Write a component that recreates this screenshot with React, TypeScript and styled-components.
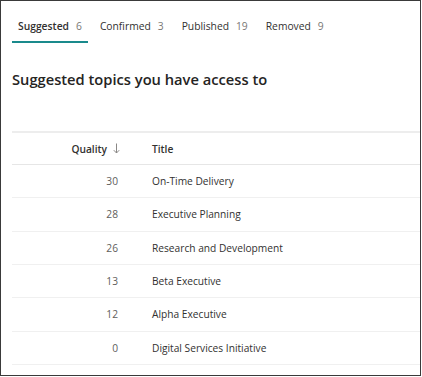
import styled, { createGlobalStyle } from "styled-components";

const GlobalStyle = createGlobalStyle`
  html, body {
    margin: 0;
    padding: 0;
    background: #ffffff;
  }
  body {
    font-family: "Open Sans", "Noto Sans", sans-serif;
    color: #323130;
  }
`;

const Frame = styled.div`
  box-sizing: border-box;
  width: 421px;
  height: 376px;
  border: 1px solid #3a3a3a;
  background: #ffffff;
  padding: 0 0 0 11px;
  overflow: hidden;
`;

const TabBar = styled.div`
  display: flex;
  align-items: stretch;
  gap: 6px;
  height: 34px;
  margin-top: 8px;
`;

const Tab = styled.div<{ $active?: boolean }>`
  position: relative;
  display: flex;
  align-items: center;
  gap: 7px;
  padding: 0 6px;
  font-size: 10.3px;
  font-weight: ${(p) => (p.$active ? 600 : 400)};
  color: #323130;
  &::after {
    content: "";
    position: absolute;
    left: 0;
    right: 0;
    bottom: 0;
    height: 2px;
    background: ${(p) => (p.$active ? "#1a8a8c" : "transparent")};
  }
`;

const Count = styled.span`
  font-weight: 400;
  color: #797775;
`;

const Heading = styled.h2`
  margin: 25px 0 0;
  font-size: 14.7px;
  font-weight: 600;
  line-height: 22px;
  color: #252423;
`;

const Table = styled.div`
  margin-top: 41px;
  border-top: 2px solid #ededed;
`;

const Row = styled.div<{ $header?: boolean }>`
  box-sizing: border-box;
  display: grid;
  grid-template-columns: 117px 1fr;
  align-items: center;
  height: ${(p) => (p.$header ? "32px" : "33.33px")};
  border-bottom: 1px solid ${(p) => (p.$header ? "#e6e6e6" : "#f0f0f0")};
  font-size: 10.2px;
`;

const QualityCell = styled.div<{ $header?: boolean }>`
  display: flex;
  justify-content: flex-end;
  align-items: center;
  gap: 6px;
  padding-right: ${(p) => (p.$header ? "9px" : "11px")};
  color: ${(p) => (p.$header ? "#323130" : "#605e5c")};
  font-weight: ${(p) => (p.$header ? 600 : 400)};
`;

const TitleCell = styled.div<{ $header?: boolean }>`
  padding-left: 23px;
  color: #323130;
  font-weight: ${(p) => (p.$header ? 600 : 400)};
`;

const SortArrow = () => (
  <svg width="7" height="11" viewBox="0 0 7 11" fill="none">
    <path d="M3.5 0.5V10" stroke="#8a8886" strokeWidth="1" />
    <path d="M0.8 7.2L3.5 10L6.2 7.2" stroke="#8a8886" strokeWidth="1" />
  </svg>
);

const tabs = [
  { label: "Suggested", count: 6, active: true },
  { label: "Confirmed", count: 3 },
  { label: "Published", count: 19 },
  { label: "Removed", count: 9 },
];

const topics = [
  { quality: 30, title: "On-Time Delivery" },
  { quality: 28, title: "Executive Planning" },
  { quality: 26, title: "Research and Development" },
  { quality: 13, title: "Beta Executive" },
  { quality: 12, title: "Alpha Executive" },
  { quality: 0, title: "Digital Services Initiative" },
];

const App = () => {
  return (
    <>
      <GlobalStyle />
      <Frame>
        <TabBar>
          {tabs.map((t) => (
            <Tab key={t.label} $active={t.active}>
              {t.label}
              <Count>{t.count}</Count>
            </Tab>
          ))}
        </TabBar>
        <Heading>Suggested topics you have access to</Heading>
        <Table>
          <Row $header>
            <QualityCell $header>
              Quality
              <SortArrow />
            </QualityCell>
            <TitleCell $header>Title</TitleCell>
          </Row>
          {topics.map((t) => (
            <Row key={t.title}>
              <QualityCell>{t.quality}</QualityCell>
              <TitleCell>{t.title}</TitleCell>
            </Row>
          ))}
        </Table>
      </Frame>
    </>
  );
};
export default App;
